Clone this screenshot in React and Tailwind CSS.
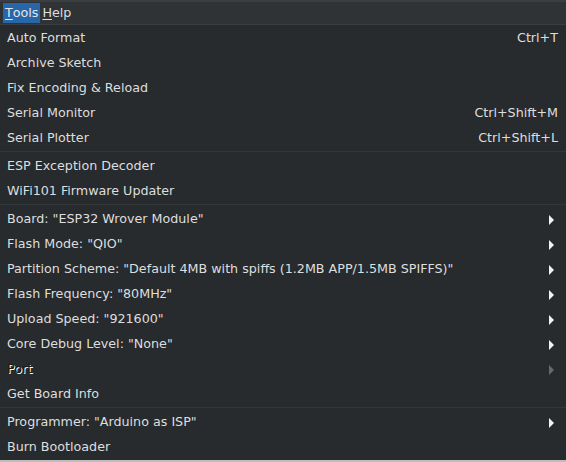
const sections = [
  [
    { label: 'Auto Format', shortcut: 'Ctrl+T' },
    { label: 'Archive Sketch' },
    { label: 'Fix Encoding & Reload' },
    { label: 'Serial Monitor', shortcut: 'Ctrl+Shift+M' },
    { label: 'Serial Plotter', shortcut: 'Ctrl+Shift+L' },
  ],
  [
    { label: 'ESP Exception Decoder' },
    { label: 'WiFi101 Firmware Updater' },
  ],
  [
    { label: 'Board: "ESP32 Wrover Module"', sub: true },
    { label: 'Flash Mode: "QIO"', sub: true },
    { label: 'Partition Scheme: "Default 4MB with spiffs (1.2MB APP/1.5MB SPIFFS)"', sub: true },
    { label: 'Flash Frequency: "80MHz"', sub: true },
    { label: 'Upload Speed: "921600"', sub: true },
    { label: 'Core Debug Level: "None"', sub: true },
    { label: 'Port', sub: true, disabled: true },
    { label: 'Get Board Info' },
  ],
  [
    { label: 'Programmer: "Arduino as ISP"', sub: true },
    { label: 'Burn Bootloader' },
  ],
]

const Arrow = ({ disabled }) => (
  <svg width="6" height="10" viewBox="0 0 6 10" className="shrink-0">
    <path d="M0 0 L5 5 L0 10 Z" fill={disabled ? '#666a6d' : '#f2f2f2'} />
  </svg>
)

const MenuItem = ({ item }) => (
  <div className="flex items-center justify-between h-[25px] pt-[2px] pl-[7px] pr-[8px]">
    <span
      className={
        item.disabled
          ? 'text-[#1a1a1a] [text-shadow:1px_1px_0_#ffffff]'
          : 'text-[#dedede]'
      }
    >
      {item.label}
    </span>
    {item.shortcut && <span className="text-[#dedede]">{item.shortcut}</span>}
    {item.sub && (
      <div className="pr-[3px]">
        <Arrow disabled={item.disabled} />
      </div>
    )}
  </div>
)

export default function App() {
  return (
    <div className="w-[566px] h-[462px] overflow-hidden bg-[#272b2e] text-[12.7px] leading-none font-['DejaVu_Sans',sans-serif] flex flex-col">
      <div className="h-[2px] bg-[#3a3e41]" />
      <div className="h-[23px] bg-[#2f3336] flex items-center pl-[3px] border-b border-[#3a3e41]">
        <div className="h-[20px] px-[2px] pt-[1px] flex items-center bg-[#2766a9] text-[#e6e6e6]">
          <span className="underline underline-offset-2">T</span>ools
        </div>
        <div className="h-[20px] px-[2px] pt-[1px] flex items-center text-[#dedede]">
          <span className="underline underline-offset-2">H</span>elp
        </div>
      </div>
      <div className="flex flex-col">
        {sections.map((section, i) => (
          <div key={i}>
            {i > 0 && (
              <div className="h-[3px] flex items-center">
                <div className="h-px w-full bg-[#33373a]" />
              </div>
            )}
            {section.map((item) => (
              <MenuItem key={item.label} item={item} />
            ))}
          </div>
        ))}
      </div>
      <div className="mt-auto h-[2px] bg-[#bdbdbd]" />
    </div>
  )
}
